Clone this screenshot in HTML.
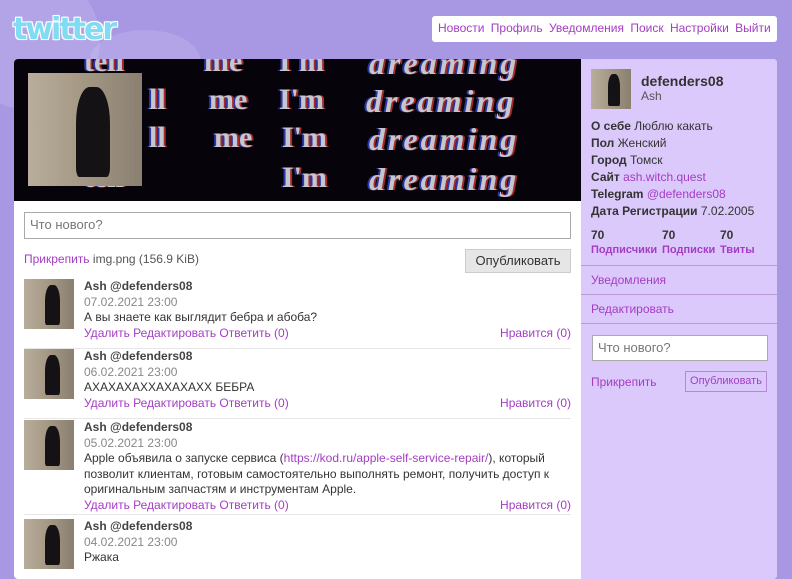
<!DOCTYPE html>
<html><head><meta charset="utf-8"><style>
*{margin:0;padding:0;box-sizing:border-box}
body{width:792px;height:568px;overflow:hidden;background:#a898e4;font-family:"Liberation Sans",Arial,sans-serif;font-size:12px;color:#333;position:relative}
a{color:#a43cc4;text-decoration:none}
.bub{position:absolute;border-radius:50%;background:rgba(255,255,255,0.12)}
.logo{position:absolute;left:13px;top:12px;font:bold 30px "DejaVu Sans",sans-serif;color:#7fdcf2;letter-spacing:-2px;text-shadow:0 0 2px #fff,1px 1px 0 #fff,-1px -1px 0 #fff,1px -1px 0 #fff,-1px 1px 0 #fff}
.nav{position:absolute;left:432px;top:16px;width:345px;height:26px;background:#fff;border-radius:3px;padding:5px 6px;font-size:12px;white-space:nowrap}
.nav a{margin-right:3px}
.main{position:absolute;left:14px;top:59px;width:763px;height:520px;background:#fff;border-radius:4px;overflow:hidden}
.banner{position:absolute;left:0;top:0;width:567px;height:142px;background:#06040a;overflow:hidden}
.banner span{position:absolute;color:#e8e8f0;font:bold 30px "Liberation Serif",serif;text-shadow:2px 0 #c03030,-2px 0 #3040c0;opacity:.85;white-space:nowrap}
.banner i{font-style:italic;letter-spacing:3px;font-size:32px}
.pic{background:linear-gradient(90deg,#b8ad9c 0,#a89c88 40%,#8a8070 100%);position:absolute;overflow:hidden}
.pic:after{content:"";position:absolute;left:42%;top:12%;width:30%;height:80%;background:#141214;border-radius:40% 40% 10% 10%}
.side{position:absolute;left:567px;top:0;width:196px;height:520px;background:#dcc9fb}
.ta{position:absolute;border:1px solid #aaa;background:#fff;color:#777;font-size:13px;padding:4px 5px}
.tw{position:absolute;left:10px;width:547px;height:70px;border-bottom:1px solid #e6e6e6}
.tw .pic{left:0;top:0;width:50px;height:50px}
.tw .t{position:absolute;left:60px;top:0;line-height:15.5px;width:487px}
.nm{font-weight:bold;color:#444}
.dt{color:#888}
.like{position:absolute;right:0}
.sl{position:absolute;left:10px;line-height:17px;font-size:12px}
.sl b{color:#333}
.hr{position:absolute;left:0;width:196px;border-top:1px solid #b89ad8}
</style></head><body>
<div class="bub" style="left:-40px;top:-30px;width:140px;height:140px"></div>
<div class="bub" style="left:90px;top:30px;width:110px;height:60px"></div>
<div class="logo">twitter</div>
<div class="nav"><a>Новости</a> <a>Профиль</a> <a>Уведомления</a> <a>Поиск</a> <a>Настройки</a> <a>Выйти</a></div>
<div class="main">
 <div class="banner">
  <span style="left:70px;top:-14px">tell</span><span style="left:190px;top:-14px">me</span><span style="left:265px;top:-14px">I'm</span><span style="left:355px;top:-14px"><i>dreaming</i></span>
  <span style="left:135px;top:24px">ll</span><span style="left:195px;top:24px">me</span><span style="left:265px;top:24px">I'm</span><span style="left:352px;top:24px"><i>dreaming</i></span>
  <span style="left:135px;top:62px">ll</span><span style="left:200px;top:62px">me</span><span style="left:268px;top:62px">I'm</span><span style="left:355px;top:62px"><i>dreaming</i></span>
  <span style="left:70px;top:102px">tell</span><span style="left:268px;top:102px">I'm</span><span style="left:355px;top:102px"><i>dreaming</i></span>
  <div class="pic" style="left:14px;top:14px;width:114px;height:113px"></div>
 </div>
 <div class="ta" style="left:10px;top:153px;width:547px;height:27px">Что нового?</div>
 <div style="position:absolute;left:10px;top:193px;font-size:12px"><a>Прикрепить</a> <span style="color:#555">img.png (156.9 KiB)</span></div>
 <div style="position:absolute;left:451px;top:190px;width:106px;height:24px;background:#e6e6e6;border:1px solid #ccc;font-size:13px;text-align:center;line-height:22px;color:#333">Опубликовать</div>
 <div class="tw" style="top:220px"><div class="pic"></div><div class="t"><div class="nm">Ash @defenders08</div><div class="dt">07.02.2021 23:00</div><div>А вы знаете как выглядит бебра и абоба?</div><div><a>Удалить</a> <a>Редактировать</a> <a>Ответить (0)</a><a class="like">Нравится (0)</a></div></div></div>
 <div class="tw" style="top:290px"><div class="pic"></div><div class="t"><div class="nm">Ash @defenders08</div><div class="dt">06.02.2021 23:00</div><div>АХАХАХАХХАХАХАХХ БЕБРА</div><div><a>Удалить</a> <a>Редактировать</a> <a>Ответить (0)</a><a class="like">Нравится (0)</a></div></div></div>
 <div class="tw" style="top:361px;height:95px"><div class="pic"></div><div class="t"><div class="nm">Ash @defenders08</div><div class="dt">05.02.2021 23:00</div><div>Apple объявила о запуске сервиса (<a>https://kod.ru/apple-self-service-repair/</a>), который позволит клиентам, готовым самостоятельно выполнять ремонт, получить доступ к оригинальным запчастям и инструментам Apple.</div><div><a>Удалить</a> <a>Редактировать</a> <a>Ответить (0)</a><a class="like">Нравится (0)</a></div></div></div>
 <div class="tw" style="top:460px"><div class="pic"></div><div class="t"><div class="nm">Ash @defenders08</div><div class="dt">04.02.2021 23:00</div><div>Ржака</div></div></div>
 <div class="side">
  <div class="pic" style="left:10px;top:10px;width:40px;height:40px"></div>
  <div style="position:absolute;left:60px;top:14px;font-weight:bold;font-size:14px;color:#333">defenders08</div>
  <div style="position:absolute;left:60px;top:30px;color:#555">Ash</div>
  <div class="sl" style="top:59px"><b>О себе</b> Люблю какать</div>
  <div class="sl" style="top:76px"><b>Пол</b> Женский</div>
  <div class="sl" style="top:93px"><b>Город</b> Томск</div>
  <div class="sl" style="top:110px"><b>Сайт</b> <a>ash.witch.quest</a></div>
  <div class="sl" style="top:127px"><b>Telegram</b> <a>@defenders08</a></div>
  <div class="sl" style="top:144px"><b>Дата Регистрации</b> 7.02.2005</div>
  <div style="position:absolute;left:10px;top:169px;font-weight:bold;line-height:14px"><div>70</div><a style="font-size:11px">Подписчики</a></div>
  <div style="position:absolute;left:81px;top:169px;font-weight:bold;line-height:14px"><div>70</div><a style="font-size:11px">Подписки</a></div>
  <div style="position:absolute;left:139px;top:169px;font-weight:bold;line-height:14px"><div>70</div><a style="font-size:11px">Твиты</a></div>
  <div class="hr" style="top:206px"></div>
  <a style="position:absolute;left:10px;top:214px">Уведомления</a>
  <div class="hr" style="top:235px"></div>
  <a style="position:absolute;left:10px;top:243px">Редактировать</a>
  <div class="hr" style="top:264px"></div>
  <div class="ta" style="left:11px;top:276px;width:176px;height:26px">Что нового?</div>
  <a style="position:absolute;left:10px;top:316px">Прикрепить</a>
  <div style="position:absolute;left:104px;top:312px;width:82px;height:21px;border:1px solid #b48ad8;font-size:11px;line-height:19px;text-align:center;color:#a43cc4">Опубликовать</div>
 </div>
</div>
</body></html>
